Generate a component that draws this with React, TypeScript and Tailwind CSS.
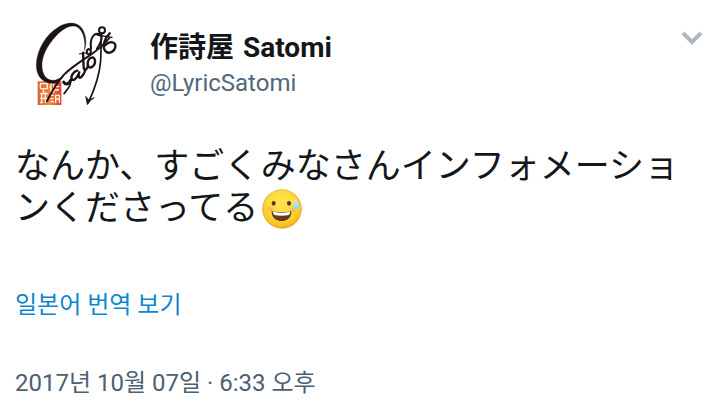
const tweet = {
    name: "作詩屋",
    latinName: "Satomi",
    handle: "@LyricSatomi",
    text: "なんか、すごくみなさんインフォメーションくださってる",
    translate: "일본어 번역 보기",
    date: "2017년 10월 07일 · 6:33 오후",
}

function Avatar() {
    return (
        <svg viewBox="-15 0 360 330" className="h-[110px] w-[120px] shrink-0" role="img" aria-label={tweet.latinName}>
            <defs>
                <linearGradient id="seal" x1="0" y1="0" x2="1" y2="0">
                    <stop offset="0" stopColor="#d9603a" />
                    <stop offset="0.5" stopColor="#f0883a" />
                    <stop offset="1" stopColor="#e23c30" />
                </linearGradient>
            </defs>
            {/* red seal */}
            <rect x="53" y="214" width="71" height="71" fill="url(#seal)" />
            <g fill="none" stroke="#fff3df" strokeWidth="4">
                <path d="M60 221h23M61 222v14M82 222v14M61 236h22M70 238v12M60 251h24M65 251v26M76 246v32M60 265h23M60 278h8" />
                <path d="M95 220l-5 15M93 232v18M101 221v27M101 230h17M101 240h16M92 256h9M92 266h9M92 275h10M107 255v24M107 256h11v22M107 267h11" />
            </g>
            {/* big brush loop */}
            <path
                d="M193 122C197 98 192 68 176 54C158 40 132 53 109 77C80 107 64 142 66 171C68 199 84 215 107 210C116 207 124 203 130 199C122 213 111 220 97 220C66 219 48 196 49 164C50 120 77 73 117 50C144 35 170 35 185 54C199 74 201 101 193 122Z"
                fill="#1d1314"
                stroke="#1d1314"
                strokeWidth="1"
            />
            <g fill="none" stroke="#1d1314" strokeLinecap="round" strokeLinejoin="round">
                {/* long diagonal */}
                <path strokeWidth="6" d="M81 273C94 247 108 221 130 196C151 174 178 157 205 139C231 122 252 104 268 84" />
                {/* s */}
                <path strokeWidth="9" d="M131 216C137 227 147 222 152 211" />
                <path strokeWidth="5" d="M152 211C153 227 144 236 132 251" />
                {/* a */}
                <path strokeWidth="7" d="M172 182C160 184 150 200 156 209C163 214 173 200 178 187C173 201 177 208 185 200C190 195 193 189 196 181" />
                {/* t */}
                <path strokeWidth="7" d="M189 128C191 147 189 165 192 177C197 184 202 174 204 167" />
                <path strokeWidth="3" d="M178 132L203 128" />
                {/* o */}
                <path strokeWidth="6" d="M206 117C197 121 199 134 207 133C215 130 214 117 206 117" />
                <path strokeWidth="7" d="M218 142C205 143 199 160 206 171C215 177 227 164 225 151C223 144 220 142 218 142" />
                {/* m */}
                <path strokeWidth="6" d="M213 116C209 94 216 73 231 71C244 71 248 82 242 96C239 103 235 110 231 116" />
                <circle strokeWidth="6" cx="246" cy="61" r="9" />
                <path strokeWidth="4" d="M232 75C247 80 264 78 276 82" />
                {/* closing loop */}
                <path strokeWidth="7" d="M269 70C254 84 247 108 254 120C262 135 283 127 286 111C289 95 270 91 255 106" />
                {/* tail with arrow head */}
                <path strokeWidth="5" d="M245 74C242 92 244 118 242 151C239 190 224 238 205 277" />
            </g>
            <path d="M197 259L206 269L223 263L211 272L202 284Z" fill="#1d1314" stroke="#1d1314" strokeWidth="2" />
        </svg>
    )
}

function SweatSmile() {
    return (
        <svg viewBox="0 0 120 120" className="mb-1 ml-1 inline-block size-10 align-middle" role="img" aria-label="😅">
            <defs>
                <radialGradient id="face" cx="0.48" cy="0.38" r="0.64">
                    <stop offset="0" stopColor="#ffe44d" />
                    <stop offset="0.55" stopColor="#fddb3c" />
                    <stop offset="0.85" stopColor="#f8c11f" />
                    <stop offset="1" stopColor="#e9a11b" />
                </radialGradient>
                <radialGradient id="cheek">
                    <stop offset="0" stopColor="#ff9a3c" stopOpacity="0.6" />
                    <stop offset="1" stopColor="#ff9a3c" stopOpacity="0" />
                </radialGradient>
                <linearGradient id="drop" x1="0" y1="0" x2="0" y2="1">
                    <stop offset="0" stopColor="#d3effa" />
                    <stop offset="1" stopColor="#8fd2f0" />
                </linearGradient>
            </defs>
            <circle cx="60" cy="60" r="58" fill="url(#face)" stroke="#d99b2c" strokeWidth="2" />
            <ellipse cx="24" cy="59" rx="16" ry="12" fill="url(#cheek)" />
            <ellipse cx="93" cy="61" rx="14" ry="11" fill="url(#cheek)" />
            <ellipse cx="35" cy="43" rx="6" ry="7" fill="#57381f" />
            <ellipse cx="81" cy="43" rx="6" ry="7" fill="#57381f" />
            <path d="M29 65Q59 75 88 65C90 83 77 96 59 96C41 96 27 83 29 65Z" fill="#643a20" />
            <path d="M32 67Q59 76 85 67Q85 73 81 78Q59 83 37 78Q32 73 32 67Z" fill="#fff" />
            <path d="M101 31C109 41 114 48 112 54C109 63 96 63 93 54C91 48 96 40 101 31Z" fill="url(#drop)" />
        </svg>
    )
}

export default function App() {
    return (
        <article className="min-h-screen bg-white px-[15px] pt-[10px] pb-2 font-[Roboto,'Noto_Sans_CJK_KR',sans-serif]">
            <header className="flex items-start">
                <Avatar />
                <div className="min-w-0 flex-1 pt-[19px] pl-[15px]">
                    <h1
                        lang="ja"
                        className="flex gap-[9px] font-[Roboto,'Noto_Sans_CJK_JP',sans-serif] text-[28px] leading-[38px] font-bold text-[#14171a]"
                    >
                        <span>{tweet.name}</span>
                        <span>{tweet.latinName}</span>
                    </h1>
                    <p className="text-2xl leading-8 text-[#52687b]">{tweet.handle}</p>
                </div>
                <button type="button" aria-label="More" className="mt-[20px] text-[#aab8c2]">
                    <svg viewBox="0 0 26 16" className="h-4 w-[26px]" fill="none" stroke="currentColor" strokeWidth="4">
                        <path d="M4 3L13 12L22 3" />
                    </svg>
                </button>
            </header>

            <p lang="ja" className="mt-[26px] font-[Roboto,'Noto_Sans_CJK_JP',sans-serif] text-[35px] leading-[42px] text-[#14171a]">
                {tweet.text}
                <SweatSmile />
            </p>

            <a href="#translate" className="mt-[56px] block w-fit text-2xl leading-8 text-[#0c87cf]">
                {tweet.translate}
            </a>

            <time dateTime="2017-10-07T18:33" className="mt-[46px] block text-2xl leading-8 text-[#4c6072]">
                {tweet.date}
            </time>
        </article>
    )
}
